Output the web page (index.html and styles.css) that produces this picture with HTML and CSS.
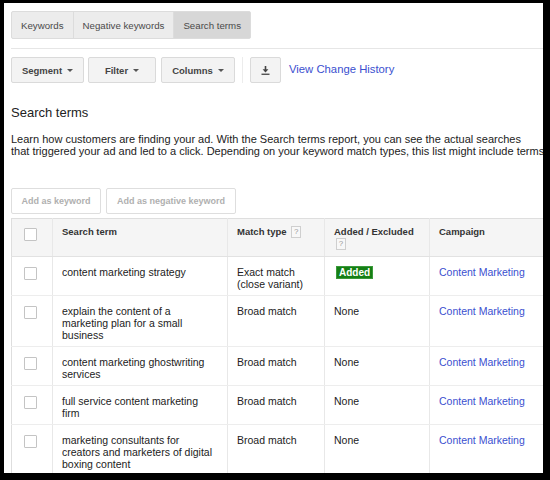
FILE: index.html
```html
<!DOCTYPE html>
<html lang="en">
<head>
    <meta charset="UTF-8">
    <meta name="viewport" content="width=device-width, initial-scale=1.0">
    <title>Search terms</title>
    <link rel="stylesheet" href="styles.css">
</head>
<body>
    <div class="page">
        <div class="tabs">
            <div class="tab">Keywords</div>
            <div class="tab">Negative keywords</div>
            <div class="tab active">Search terms</div>
        </div>

        <div class="divider"></div>

        <div class="toolbar">
            <button class="btn btn-segment">Segment <span class="caret"></span></button>
            <button class="btn btn-filter">Filter <span class="caret"></span></button>
            <button class="btn btn-columns">Columns <span class="caret"></span></button>
            <div class="vsep"></div>
            <button class="btn btn-icon" title="Download">
                <svg width="9" height="10" viewBox="0 0 9 10">
                    <path d="M4.5 1v5.2" stroke="#444" stroke-width="1.6" fill="none"/>
                    <path d="M1.6 4.2l2.9 3.2 2.9-3.2z" fill="#444"/>
                    <rect x="0.5" y="8.6" width="8" height="1.3" fill="#444"/>
                </svg>
            </button>
            <a class="history-link" href="#">View Change History</a>
        </div>

        <h2 class="title">Search terms</h2>
        <p class="intro">Learn how customers are finding your ad. With the Search terms report, you can see the actual searches<br>that triggered your ad and led to a click. Depending on your keyword match types, this list might include terms that aren't exact matches to your keywords.</p>

        <div class="actions">
            <button class="btn-plain btn-add">Add as keyword</button>
            <button class="btn-plain btn-neg">Add as negative keyword</button>
        </div>

        <table class="terms">
            <colgroup>
                <col class="c-check">
                <col class="c-term">
                <col class="c-match">
                <col class="c-added">
                <col class="c-camp">
            </colgroup>
            <thead>
                <tr>
                    <th class="check"><span class="box"></span></th>
                    <th>Search term</th>
                    <th>Match type <span class="help">?</span></th>
                    <th>Added / Excluded <span class="help">?</span></th>
                    <th>Campaign</th>
                </tr>
            </thead>
            <tbody>
                <tr>
                    <td class="check"><span class="box"></span></td>
                    <td>content marketing strategy</td>
                    <td>Exact match<br>(close variant)</td>
                    <td><span class="badge">Added</span></td>
                    <td><a href="#">Content Marketing</a></td>
                </tr>
                <tr>
                    <td class="check"><span class="box"></span></td>
                    <td>explain the content of a marketing plan for a small business</td>
                    <td>Broad match</td>
                    <td>None</td>
                    <td><a href="#">Content Marketing</a></td>
                </tr>
                <tr>
                    <td class="check"><span class="box"></span></td>
                    <td>content marketing ghostwriting services</td>
                    <td>Broad match</td>
                    <td>None</td>
                    <td><a href="#">Content Marketing</a></td>
                </tr>
                <tr>
                    <td class="check"><span class="box"></span></td>
                    <td>full service content marketing firm</td>
                    <td>Broad match</td>
                    <td>None</td>
                    <td><a href="#">Content Marketing</a></td>
                </tr>
                <tr>
                    <td class="check"><span class="box"></span></td>
                    <td>marketing consultants for creators and marketers of digital boxing content</td>
                    <td>Broad match</td>
                    <td>None</td>
                    <td><a href="#">Content Marketing</a></td>
                </tr>
            </tbody>
        </table>
    </div>

    <div class="frame"></div>
</body>
</html>
```

FILE: styles.css
```css
html, body {
    margin: 0;
    padding: 0;
    background: #fff;
    overflow: hidden;
}
body {
    font-family: "Liberation Sans", Arial, sans-serif;
    color: #222;
    width: 550px;
    height: 480px;
}
.page {
    width: 620px;
    padding: 11px 0 0 11px;
}
.frame {
    position: fixed;
    top: 0;
    left: 0;
    right: 0;
    bottom: 0;
    border-style: solid;
    border-color: #000;
    border-width: 3px 7px 7px 4px;
    pointer-events: none;
}

/* tabs */
.tabs {
    display: inline-flex;
    height: 28px;
    border: 1px solid #dcdcdc;
    border-radius: 2px;
    box-sizing: border-box;
    background: #ececec;
}
.tab {
    display: flex;
    align-items: center;
    padding: 0 9px;
    font-size: 9.7px;
    color: #4a4a4a;
    border-left: 1px solid #dcdcdc;
}
.tab:first-child {
    border-left: none;
}
.tab.active {
    background: #d7d7d7;
}
.divider {
    height: 1px;
    background: #e6e6e6;
    margin-top: 9px;
}

/* toolbar */
.toolbar {
    display: flex;
    align-items: center;
    margin-top: 8px;
    height: 26px;
}
.btn {
    height: 26px;
    box-sizing: border-box;
    border: 1px solid #dadada;
    border-radius: 2px;
    background: #f3f3f3;
    font-family: "Liberation Sans", Arial, sans-serif;
    font-weight: bold;
    font-size: 9.5px;
    color: #444;
    margin: 0 4px 0 0;
    padding: 0;
    display: flex;
    align-items: center;
    justify-content: center;
    gap: 5px;
}
.btn-segment { width: 73px; }
.btn-filter { width: 68px; margin-right: 5px; }
.btn-columns { width: 74px; }
.btn-icon { width: 31px; }
.caret {
    display: inline-block;
    width: 0;
    height: 0;
    border-left: 3px solid transparent;
    border-right: 3px solid transparent;
    border-top: 3px solid #555;
}
.vsep {
    width: 1px;
    height: 26px;
    background: #ececec;
    margin: 0 7px 0 3px;
}
.history-link {
    margin-left: 4px;
    font-size: 11.3px;
    color: #3a4fcf;
    text-decoration: none;
    margin-top: -2px;
}

/* heading */
.title {
    font-size: 13px;
    font-weight: normal;
    line-height: 14px;
    color: #222;
    margin: 23px 0 0 0;
}
.intro {
    font-size: 11px;
    line-height: 12px;
    white-space: nowrap;
    margin: 13px 0 0 0;
    color: #222;
}

/* add buttons */
.actions {
    display: flex;
    gap: 5px;
    margin-top: 31px;
}
.btn-plain {
    height: 26px;
    box-sizing: border-box;
    border: 1px solid #dedede;
    border-radius: 2px;
    background: #fff;
    color: #b0b0b0;
    font-family: "Liberation Sans", Arial, sans-serif;
    font-weight: bold;
    font-size: 9px;
    padding: 0;
}
.btn-add { width: 90px; }
.btn-neg { width: 130px; }

/* table */
.terms {
    margin-top: 4px;
    border-collapse: collapse;
    table-layout: fixed;
    width: 600px;
    border: 1px solid #dedede;
}
.c-check { width: 41px; }
.c-term { width: 175px; }
.c-match { width: 97px; }
.c-added { width: 105px; }
.c-camp { width: 182px; }
.terms th,
.terms td {
    text-align: left;
    vertical-align: top;
    border-left: 1px solid #e8e8e8;
    line-height: 12px;
}
.terms th {
    background: #f5f5f5;
    font-size: 9.5px;
    font-weight: bold;
    color: #333;
    padding: 7px 9px 6px 9px;
    border-bottom: 1px solid #e2e2e2;
}
.terms td {
    font-size: 10.5px;
    padding: 9px 9px 5px 9px;
    border-bottom: 1px solid #ededed;
    color: #222;
}
.terms th.check,
.terms td.check {
    padding: 9px 0 0 12px;
    border-left: none;
}
.terms td.check {
    padding-top: 10px;
}
.box {
    display: block;
    width: 11px;
    height: 11px;
    border: 1px solid #c4c4c4;
    border-radius: 1px;
    background: #fff;
}
.help {
    display: inline-block;
    width: 8px;
    height: 10px;
    line-height: 10px;
    border: 1px solid #cfcfcf;
    background: #f8f8f8;
    color: #999;
    font-size: 8px;
    font-weight: normal;
    text-align: center;
    vertical-align: top;
    margin-left: 2px;
}
.badge {
    display: inline-block;
    background: #157f15;
    border: 1px solid #3a9a3a;
    color: #fff;
    font-weight: bold;
    font-size: 10px;
    line-height: 11px;
    padding: 0 2px;
    margin-left: 2px;
}
.terms a {
    color: #3a4fcf;
    text-decoration: none;
}
```
